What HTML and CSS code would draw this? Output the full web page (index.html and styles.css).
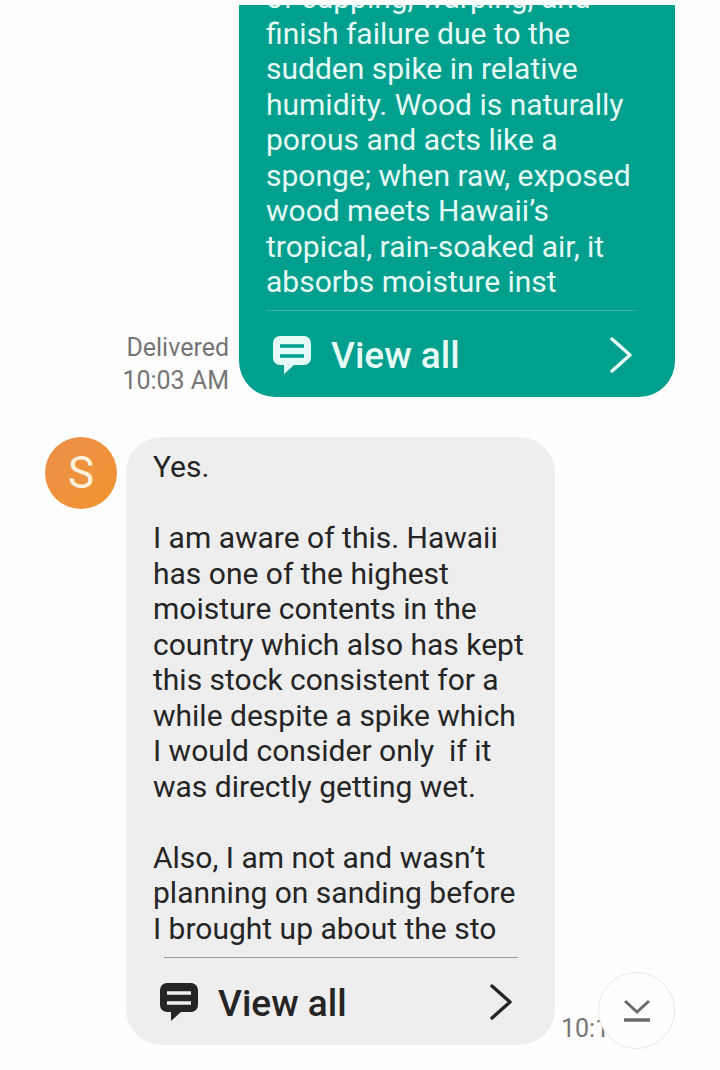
FILE: index.html
```html
<!DOCTYPE html>
<html>
<head>
  <meta charset="utf-8">
  <title>Messages</title>
  <link rel="stylesheet" href="styles.css">
</head>
<body>
<div class="thread">

  <div class="row row-sent">
    <div class="meta">
      <div>Delivered</div>
      <div>10:03 AM</div>
    </div>
    <div class="bubble bubble-sent">
      <div class="bubble-text bubble-text-cut">of cupping, warping, and
finish failure due to the
sudden spike in relative
humidity. Wood is naturally
porous and acts like a
sponge; when raw, exposed
wood meets Hawaii’s
tropical, rain-soaked air, it
absorbs moisture inst</div>
      <div class="divider"></div>
      <div class="view-all">
        <svg class="msg-icon" viewBox="0 0 38 38">
          <path class="msg-shape" d="M7 0h24a7 7 0 0 1 7 7v15a7 7 0 0 1-7 7H21l-10 9v-9H7a7 7 0 0 1-7-7V7a7 7 0 0 1 7-7z"/>
          <path class="msg-lines" d="M7 10h24M7 20h24"/>
        </svg>
        <span class="view-label">View all</span>
        <svg class="chevron" viewBox="0 0 24 36"><path d="M3 2l18 16L3 34"/></svg>
      </div>
    </div>
  </div>

  <div class="row row-received">
    <div class="avatar">S</div>
    <div class="bubble bubble-received">
      <div class="bubble-text">Yes.

I am aware of this. Hawaii
has one of the highest
moisture contents in the
country which also has kept
this stock consistent for a
while despite a spike which
I would consider only  if it
was directly getting wet.

Also, I am not and wasn’t
planning on sanding before
I brought up about the sto</div>
      <div class="divider"></div>
      <div class="view-all">
        <svg class="msg-icon" viewBox="0 0 38 38">
          <path class="msg-shape" d="M7 0h24a7 7 0 0 1 7 7v15a7 7 0 0 1-7 7H21l-10 9v-9H7a7 7 0 0 1-7-7V7a7 7 0 0 1 7-7z"/>
          <path class="msg-lines" d="M7 10h24M7 20h24"/>
        </svg>
        <span class="view-label">View all</span>
        <svg class="chevron" viewBox="0 0 24 36"><path d="M3 2l18 16L3 34"/></svg>
      </div>
    </div>
    <div class="time">10:17</div>
  </div>

</div>

<button class="scroll-down">
  <svg viewBox="0 0 28 24"><path class="arrow" d="M2 2l12 11L26 2"/><path class="bar" d="M1 21h26"/></svg>
</button>
</body>
</html>
```

FILE: styles.css
```css
* {
  box-sizing: border-box;
}

html, body {
  margin: 0;
  height: 1070px;
  overflow: hidden;
}

body {
  position: relative;
  background: #fefefe;
  font-family: Roboto, "Liberation Sans", sans-serif;
}

.thread {
  padding-top: 5px;
}

.row {
  display: flex;
}

.row-sent {
  justify-content: flex-end;
  align-items: flex-end;
  padding-right: 45px;
}

.row-received {
  margin-top: 40px;
  padding-left: 45px;
  align-items: flex-start;
}

/* bubbles */
.bubble {
  overflow: hidden;
}

.bubble-sent {
  width: 436px;
  height: 392px;
  background: #009f8e;
  color: #e6fbf6;
  padding: 0 38px 0 27px;
  border-radius: 0 0 36px 36px;
}

.bubble-received {
  width: 429px;
  height: 608px;
  margin-left: 9px;
  background: #eeeeee;
  color: #252525;
  padding: 12px 38px 0 27px;
  border-radius: 36px;
}

.bubble-text {
  font-size: 30px;
  line-height: 35.5px;
  white-space: pre;
}

.bubble-text-cut {
  margin-top: -25px;
}

.divider {
  height: 1px;
  margin: 10px 0 0;
  background: #37b3a5;
}

.bubble-received .divider {
  margin: 11px -1px 0 11px;
  background: #9a9a9a;
}

.view-all {
  display: flex;
  align-items: center;
  height: 90px;
}

.msg-icon {
  width: 38px;
  height: 38px;
  margin: 0 20px 2px 7px;
  flex: none;
}

.bubble-sent .msg-shape { fill: #e6fbf6; }
.bubble-sent .msg-lines { stroke: #009f8e; }
.bubble-received .msg-shape { fill: #252525; }
.bubble-received .msg-lines { stroke: #eeeeee; }

.msg-lines {
  fill: none;
  stroke-width: 3.5;
}

.view-label {
  font-size: 37px;
  font-weight: 500;
}

.chevron {
  width: 24px;
  height: 36px;
  margin-left: auto;
  margin-right: 4px;
  margin-bottom: 2px;
  fill: none;
  stroke: currentColor;
  stroke-width: 3.4;
  stroke-linecap: round;
  stroke-linejoin: round;
}

/* side labels */
.meta {
  margin: 0 10px 0 0;
  text-align: right;
  color: #757575;
  font-size: 25px;
  line-height: 33px;
}

.avatar {
  width: 72px;
  height: 72px;
  flex: none;
  border-radius: 50%;
  background: linear-gradient(135deg, #ea8f4c, #f3952f);
  color: #fdf0dd;
  font-size: 44px;
  line-height: 72px;
  text-align: center;
}

.time {
  align-self: flex-end;
  margin-left: 6px;
  color: #757575;
  font-size: 25px;
  line-height: 33px;
  white-space: nowrap;
}

/* scroll to bottom button, floats over the thread */
.scroll-down {
  position: absolute;
  left: 598px;
  top: 972px;
  width: 77px;
  height: 77px;
  padding: 0;
  border: 1px solid #e8e8e8;
  border-radius: 50%;
  background: #fefefe;
}

.scroll-down svg {
  display: block;
  width: 28px;
  height: 24px;
  margin: 0 auto;
}

.arrow, .bar {
  fill: none;
  stroke: #6a6a6a;
}

.arrow { stroke-width: 3; }
.bar { stroke-width: 3.5; }
```
